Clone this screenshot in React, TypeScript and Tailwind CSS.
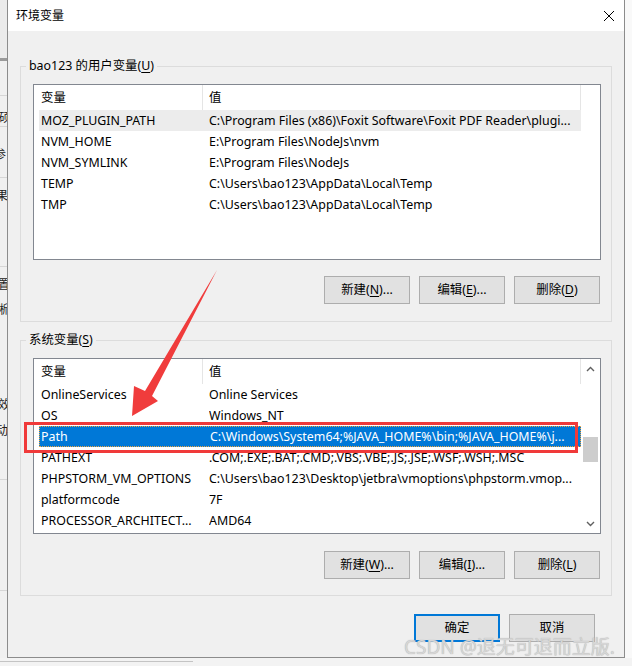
import React from "react";

type Row = { name: string; value: string };

const userVars: Row[] = [
  { name: "MOZ_PLUGIN_PATH", value: "C:\\Program Files (x86)\\Foxit Software\\Foxit PDF Reader\\plugi..." },
  { name: "NVM_HOME", value: "E:\\Program Files\\NodeJs\\nvm" },
  { name: "NVM_SYMLINK", value: "E:\\Program Files\\NodeJs" },
  { name: "TEMP", value: "C:\\Users\\bao123\\AppData\\Local\\Temp" },
  { name: "TMP", value: "C:\\Users\\bao123\\AppData\\Local\\Temp" },
];

const sysVars: Row[] = [
  { name: "OnlineServices", value: "Online Services" },
  { name: "OS", value: "Windows_NT" },
  { name: "Path", value: "C:\\Windows\\System64;%JAVA_HOME%\\bin;%JAVA_HOME%\\j..." },
  { name: "PATHEXT", value: ".COM;.EXE;.BAT;.CMD;.VBS;.VBE;.JS;.JSE;.WSF;.WSH;.MSC" },
  { name: "PHPSTORM_VM_OPTIONS", value: "C:\\Users\\bao123\\Desktop\\jetbra\\vmoptions\\phpstorm.vmop..." },
  { name: "platformcode", value: "7F" },
  { name: "PROCESSOR_ARCHITECT...", value: "AMD64" },
];

function Btn({ pre, key1, post, primary }: { pre: string; key1?: string; post?: string; primary?: boolean }) {
  return (
    <div
      className={
        "w-[86px] h-[28px] flex items-center justify-center bg-[#e1e1e1] " +
        (primary ? "border-2 border-[#0078d7]" : "border border-[#adadad]")
      }
    >
      <span className="whitespace-nowrap leading-none">
        {pre}
        {key1 !== undefined && (
          <>
            (<span className="underline underline-offset-2">{key1}</span>)
          </>
        )}
        {post}
      </span>
    </div>
  );
}

function Chevron({ up }: { up?: boolean }) {
  return (
    <svg width="9" height="6" viewBox="0 0 9 6">
      {up ? (
        <path d="M1 5 L4.5 1.5 L8 5" fill="none" stroke="#606060" strokeWidth="1.4" />
      ) : (
        <path d="M1 1 L4.5 4.5 L8 1" fill="none" stroke="#606060" strokeWidth="1.4" />
      )}
    </svg>
  );
}

function ListView({ rows, hoverIndex, selectedIndex, scroll }: { rows: Row[]; hoverIndex?: number; selectedIndex?: number; scroll?: boolean }) {
  return (
    <div className="w-[568px] h-[176px] border border-[#828790] bg-white flex">
      <div className="w-[547px] flex flex-col">
        <div className="h-[25px] flex shrink-0">
          <div className="w-[169px] border-r border-[#e5e5e5] pl-[7px] pt-[2px] flex items-center">变量</div>
          <div className="w-[378px] border-r border-[#e5e5e5] pl-[6px] pt-[2px] flex items-center">值</div>
        </div>
        {rows.map((r, i) => {
          const sel = i === selectedIndex;
          const hov = i === hoverIndex;
          return (
            <div
              key={r.name}
              className={
                "ml-[5px] w-[542px] h-[21px] flex items-center shrink-0 pt-[2px] " +
                (sel
                  ? "bg-[#0078d7] text-white border border-dotted border-[#f0a640]"
                  : hov
                  ? "bg-[#ececec]"
                  : "")
              }
            >
              <div className={"w-[170px] overflow-hidden whitespace-nowrap " + (sel ? "pl-[1px]" : "pl-[2px]")}>{r.name}</div>
              <div className="w-[368px] overflow-hidden whitespace-nowrap">{r.value}</div>
            </div>
          );
        })}
      </div>
      <div className="w-[19px] flex flex-col">
        {scroll && (
          <>
            <div className="h-[19px] flex items-center justify-center">
              <Chevron up />
            </div>
            <div className="flex-1 flex flex-col items-center">
              <div className="mt-[59px] w-[15px] h-[25px] bg-[#cdcdcd]" />
            </div>
            <div className="h-[19px] flex items-center justify-center">
              <Chevron />
            </div>
          </>
        )}
      </div>
    </div>
  );
}

function Group({ label, k, children }: { label: string; k: string; children: React.ReactNode }) {
  return (
    <div className="relative h-[256px] border border-[#dcdcdc] pt-[17px] pl-[12px] pr-[10px]">
      <div className="absolute top-[-9px] left-[5px] px-[3px] bg-[#f0f0f0] leading-[16px] whitespace-nowrap">
        {label}(<span className="underline underline-offset-2">{k}</span>)
      </div>
      {children}
    </div>
  );
}

function BackStrip() {
  return (
    <div className="w-[7px] h-full overflow-hidden bg-[#f0f0f0] flex flex-col text-[12px] leading-[16px] text-[#222]">
      <div className="h-[58px] bg-[#ebebeb] shrink-0" />
      <div className="h-[3px] bg-[#9a9a9a] shrink-0" />
      <div className="h-[34px] shrink-0" />
      <div className="h-[1px] bg-[#d6d6d6] shrink-0" />
      <div className="mt-[14px] -ml-[1px] whitespace-nowrap">硕</div>
      <div className="mt-[0px] h-[1px] bg-[#d6d6d6] shrink-0" />
      <div className="mt-[20px] -ml-[6px] whitespace-nowrap">参</div>
      <div className="mt-[14px] h-[1px] bg-[#d6d6d6] shrink-0" />
      <div className="mt-[10px] -ml-[4px] whitespace-nowrap">果</div>
      <div className="mt-[62px] h-[1px] bg-[#d6d6d6] shrink-0" />
      <div className="mt-[10px] -ml-[2px] whitespace-nowrap">置</div>
      <div className="mt-[9px] -ml-[4px] whitespace-nowrap">晰</div>
      <div className="mt-[79px] -ml-[2px] whitespace-nowrap">效</div>
      <div className="mt-[10px] -ml-[4px] whitespace-nowrap">动</div>
      <div className="mt-[40px] h-[1px] bg-[#d6d6d6] shrink-0" />
      <div className="mt-[110px] h-[1px] bg-[#d6d6d6] shrink-0" />
    </div>
  );
}

export default function App() {
  return (
    <div className="relative w-[632px] h-[666px] overflow-hidden bg-[#f0f0f0] text-[12.4px] text-black font-['Noto_Sans','Noto_Sans_CJK_SC',sans-serif]">
      <div className="flex h-[658px]">
        <BackStrip />
        <div className="w-[618px] h-full border-l border-r border-b border-[#8c8c8c] bg-[#f0f0f0] flex flex-col">
          <div className="h-[31px] bg-white flex items-center justify-between pl-[8px] pr-[9px] shrink-0">
            <span className="text-[12px]">环境变量</span>
            <svg width="12" height="12" viewBox="0 0 12 12">
              <path d="M1 1 L11 11 M11 1 L1 11" stroke="#000" strokeWidth="1" />
            </svg>
          </div>
          <div className="px-[12px] pt-[35px] flex flex-col">
            <Group label="bao123 的用户变量" k="U">
              <ListView rows={userVars} hoverIndex={0} />
              <div className="mt-[16px] flex justify-end gap-[9px] pr-[1px]">
                <Btn pre="新建" key1="N" post="..." />
                <Btn pre="编辑" key1="E" post="..." />
                <Btn pre="删除" key1="D" />
              </div>
            </Group>
            <div className="mt-[18px]">
              <Group label="系统变量" k="S">
                <ListView rows={sysVars} selectedIndex={2} scroll />
                <div className="mt-[17px] flex justify-end gap-[9px] pr-[1px]">
                  <Btn pre="新建" key1="W" post="..." />
                  <Btn pre="编辑" key1="I" post="..." />
                  <Btn pre="删除" key1="L" />
                </div>
              </Group>
            </div>
            <div className="mt-[18px] flex justify-end gap-[9px] pr-[17px]">
              <Btn pre="确定" primary />
              <Btn pre="取消" />
            </div>
          </div>
        </div>
        <div className="w-[7px] h-full bg-[#f9f9f9]" />
      </div>
      <div className="h-[8px] bg-[#f3f3f3] flex flex-col">
        <div className="mt-[3px] w-[193px] h-[1px] bg-[#c4c4c4]" />
      </div>

      {/* red highlight box */}
      <div className="absolute left-[24px] top-[422px] w-[554px] h-[31px] border-[3px] border-[#f03a3a] pointer-events-none" />

      {/* red arrow */}
      <svg className="absolute left-0 top-0 pointer-events-none" width="632" height="666" viewBox="0 0 632 666">
        <polygon points="217,270 152,396 158,401 132,416 134,386 145,391" fill="#f03c3c" />
      </svg>

      {/* watermark */}
      <div className="absolute left-[404px] top-[634px] text-[19px] leading-[26px] whitespace-nowrap text-[#d6d6d6] [text-shadow:0_0_1px_#a4a4a4] font-['Noto_Sans','Noto_Sans_CJK_SC',sans-serif]">
        CSDN @退无可退而立版.
      </div>
    </div>
  );
}
